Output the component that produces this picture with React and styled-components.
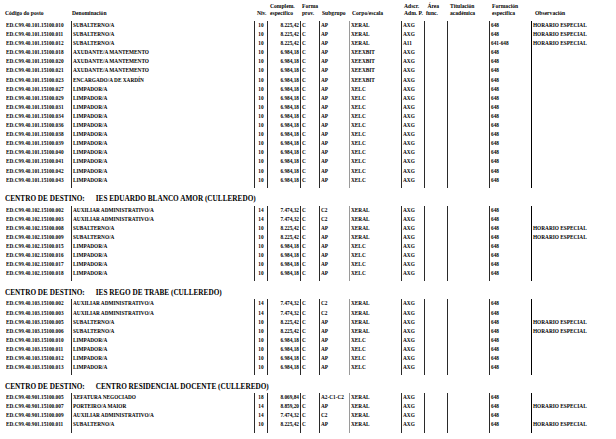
import React from 'react';
import styled, { createGlobalStyle } from 'styled-components';

const Global = createGlobalStyle`
  html, body { margin: 0; padding: 0; background: #fff; }
  body { font-family: "Liberation Serif", "Times New Roman", serif; color: #000; }
`;

const COLS = '66px 183px 13px 33px 19px 30px 52px 23px 23px 42px 42px 1fr';

const Page = styled.div`
  width: 616px;
  height: 439px;
  overflow: hidden;
  padding-left: 5px;
  box-sizing: border-box;
  font-family: "Liberation Serif", "Times New Roman", serif;
`;

const HeaderRow = styled.div`
  display: grid;
  grid-template-columns: ${COLS};
  height: 21px;
  padding-bottom: 4px;
  box-sizing: border-box;
  align-items: end;
  font-size: 5.6px;
  font-weight: 700;
  line-height: 7px;
`;

const HeadCell = styled.div`
  padding-left: ${(p) => p.$pl ?? 3}px;
  white-space: nowrap;
`;

const SectionTitle = styled.div`
  padding: 6.5px 0 1.5px;
  font-size: 7.25px;
  font-weight: 700;
  line-height: 10px;
  white-space: nowrap;
  display: flex;
  gap: 11px;
`;

const Row = styled.div`
  display: grid;
  grid-template-columns: ${COLS};
  font-size: 5.3px;
  font-weight: 700;
  line-height: 9.1px;
  & > * {
    padding-bottom: ${(p) => (p.$last ? 3 : 0)}px;
  }
`;

const lineColor = { none: 'transparent', dark: '#2a2a2a', gray: '#9a9a9a', black: '#000' };

const Cell = styled.div`
  border-left: 1px solid ${(p) => lineColor[p.$line || 'none']};
  padding-left: ${(p) => p.$pl ?? 1}px;
  padding-right: ${(p) => p.$pr ?? 0}px;
  text-align: ${(p) => p.$align || 'left'};
  white-space: nowrap;
  overflow: hidden;
`;

const header = (
  <HeaderRow>
    <HeadCell $pl={0}>Código do posto</HeadCell>
    <HeadCell $pl={1}>Denominación</HeadCell>
    <HeadCell $pl={3}>Niv.</HeadCell>
    <HeadCell $pl={3}>Complem.<br />específico</HeadCell>
    <HeadCell $pl={2}>Forma<br />prov.</HeadCell>
    <HeadCell $pl={3}>Subgrupo</HeadCell>
    <HeadCell $pl={3}>Corpo/escala</HeadCell>
    <HeadCell $pl={3}>Adscr.<br />Adm. P.</HeadCell>
    <HeadCell $pl={2}>&nbsp;Área<br />func.</HeadCell>
    <HeadCell $pl={3}>Titulación<br />académica</HeadCell>
    <HeadCell $pl={3}>Formación<br />específica</HeadCell>
    <HeadCell $pl={4}>Observación</HeadCell>
  </HeaderRow>
);

const SUB = ['SUBALTERNO/A', '10', '8.225,42', 'C', 'AP', 'XERAL', 'AXG', '648', 'HORARIO ESPECIAL'];
const LIM = ['LIMPADOR/A', '10', '6.984,18', 'C', 'AP', 'XELC', 'AXG', '648', ''];
const MAN = ['AXUDANTE/A MANTEMENTO', '10', '6.984,18', 'C', 'AP', 'XEEXBIT', 'AXG', '648', ''];
const AUX = ['AUXILIAR ADMINISTRATIVO/A', '14', '7.474,32', 'C', 'C2', 'XERAL', 'AXG', '648', ''];

const mk = (prefix, nums, data) => nums.map((n) => [prefix + n, ...data]);

const sections = [
  {
    title: null,
    rows: [
      ...mk('ED.C99.40.101.15100.', ['010', '011'], SUB),
      ['ED.C99.40.101.15100.012', 'SUBALTERNO/A', '10', '8.225,42', 'C', 'AP', 'XERAL', 'A11', '641-648', 'HORARIO ESPECIAL'],
      ...mk('ED.C99.40.101.15100.', ['018', '020', '021'], MAN),
      ['ED.C99.40.101.15100.023', 'ENCARGADO/A DE XARDÍN', '10', '6.984,18', 'C', 'AP', 'XEEXBIT', 'AXG', '648', ''],
      ...mk('ED.C99.40.101.15100.', ['027', '029', '031', '034', '036', '038', '039', '040', '041', '042', '043'], LIM),
    ],
  },
  {
    title: 'IES EDUARDO BLANCO AMOR (CULLEREDO)',
    rows: [
      ...mk('ED.C99.40.102.15100.', ['002', '003'], AUX),
      ...mk('ED.C99.40.102.15100.', ['008', '009'], SUB),
      ...mk('ED.C99.40.102.15100.', ['015', '016', '017', '018'], LIM),
    ],
  },
  {
    title: 'IES REGO DE TRABE (CULLEREDO)',
    rows: [
      ...mk('ED.C99.40.103.15100.', ['002', '003'], AUX),
      ...mk('ED.C99.40.103.15100.', ['005', '006'], SUB),
      ...mk('ED.C99.40.103.15100.', ['010', '011', '012', '013'], LIM),
    ],
  },
  {
    title: 'CENTRO RESIDENCIAL DOCENTE (CULLEREDO)',
    rows: [
      ['ED.C99.40.901.15100.005', 'XEFATURA NEGOCIADO', '18', '8.069,84', 'C', 'A2-C1-C2', 'XERAL', 'AXG', '648', ''],
      ['ED.C99.40.901.15100.007', 'PORTEIRO/A MAIOR', '14', '8.859,20', 'C', 'AP', 'XERAL', 'AXG', '648', 'HORARIO ESPECIAL'],
      ['ED.C99.40.901.15100.009', ...AUX],
      ['ED.C99.40.901.15100.011', ...SUB],
    ],
  },
];

function DataRow({ r, last }) {
  return (
    <Row $last={last}>
      <Cell $pl={0}>{r[0]}</Cell>
      <Cell $line="dark">{r[1]}</Cell>
      <Cell $line="dark" $align="center" $pl={0}>{r[2]}</Cell>
      <Cell $line="dark" $align="right" $pr={1}>{r[3]}</Cell>
      <Cell $line="dark">{r[4]}</Cell>
      <Cell $line="dark">{r[5]}</Cell>
      <Cell $line="gray">{r[6]}</Cell>
      <Cell $line="dark">{r[7]}</Cell>
      <Cell $line="dark" />
      <Cell $line="dark" />
      <Cell $line="dark">{r[8]}</Cell>
      <Cell $line="black">{r[9]}</Cell>
    </Row>
  );
}

export default function App() {
  return (
    <>
      <Global />
      <Page>
        {header}
        {sections.map((s, i) => (
          <section key={i}>
            {s.title && (
              <SectionTitle>
                <span>CENTRO DE DESTINO:</span>
                <span>{s.title}</span>
              </SectionTitle>
            )}
            {s.rows.map((r, j) => (
              <DataRow key={j} r={r} last={j === s.rows.length - 1} />
            ))}
          </section>
        ))}
      </Page>
    </>
  );
}
